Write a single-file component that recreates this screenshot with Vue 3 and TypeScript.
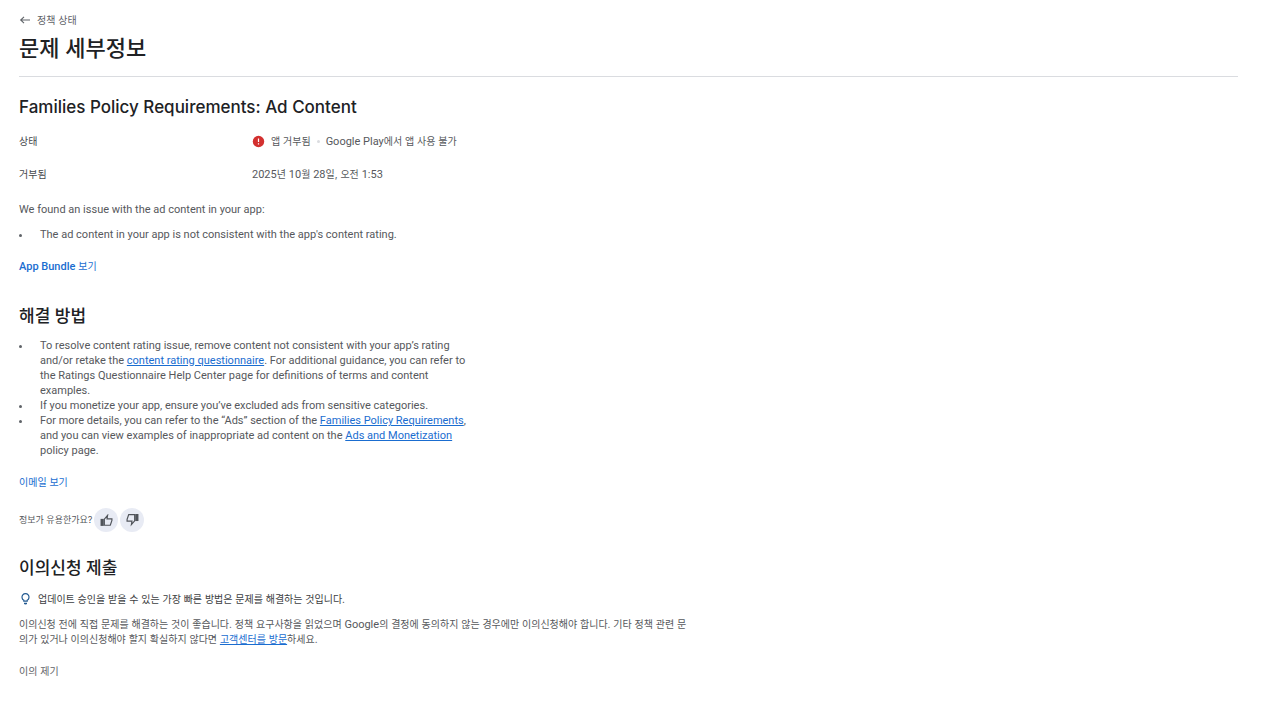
<script setup lang="ts">
import { ref } from 'vue'

type Vote = 'up' | 'down' | null

const vote = ref<Vote>(null)

function setVote(next: Vote): void {
  vote.value = vote.value === next ? null : next
}
</script>

<template>
  <main class="page">
    <header class="header">
      <a class="back" href="#policy-status">
        <svg class="back-icon" viewBox="0 0 12 12" aria-hidden="true">
          <path d="M11 6H1.6M5 2.8 1.7 6 5 9.2" fill="none" stroke="currentColor" stroke-width="1.1" />
        </svg>
        <span>정책 상태</span>
      </a>
      <h1 class="title">문제 세부정보</h1>
    </header>

    <section>
      <h2 class="heading heading-latin">Families Policy Requirements: Ad Content</h2>
      <dl class="facts">
        <div class="fact">
          <dt>상태</dt>
          <dd class="status">
            <svg class="error-icon" viewBox="0 0 13 13" aria-hidden="true">
              <circle cx="6.5" cy="6.5" r="5.7" fill="#d3302f" />
              <path d="M6.5 3.4v3.600M6.5 8.200v1.200" stroke="#fff" stroke-width="1.2" />
            </svg>
            <span>앱 거부됨</span>
            <span class="dot"></span>
            <span><span class="latin">Google Play</span>에서 앱 사용 불가</span>
          </dd>
        </div>
        <div class="fact">
          <dt>거부됨</dt>
          <dd><span class="latin">2025</span>년 <span class="latin">10</span>월 <span class="latin">28</span>일, 오전 <span class="latin">1:53</span></dd>
        </div>
      </dl>
      <p class="intro">We found an issue with the ad content in your app:</p>
      <ul class="list">
        <li>The ad content in your app is not consistent with the app's content rating.</li>
      </ul>
      <a class="action" href="#app-bundle"><span class="latin">App Bundle</span> 보기</a>
    </section>

    <section class="resolve">
      <h2 class="heading">해결 방법</h2>
      <ul class="list steps">
        <li>
          To resolve content rating issue, remove content not consistent with your app’s rating and/or
          retake the <a href="#questionnaire">content rating questionnaire</a>. For additional guidance,
          you can refer to the Ratings Questionnaire Help Center page for definitions of terms and
          content examples.
        </li>
        <li>If you monetize your app, ensure you’ve excluded ads from sensitive categories.</li>
        <li>
          For more details, you can refer to the “Ads” section of the
          <a href="#families">Families Policy Requirements</a>, and you can view examples of
          inappropriate ad content on the <a href="#ads">Ads and Monetization</a> policy page.
        </li>
      </ul>
      <a class="action" href="#email">이메일 보기</a>
      <div class="feedback">
        <span class="question">정보가 유용한가요?</span>
        <button type="button" class="vote" aria-label="예" :aria-pressed="vote === 'up'" @click="setVote('up')">
          <svg class="thumb" viewBox="0 0 24 24" aria-hidden="true">
            <path d="M1 9h6v13H1z" />
            <path d="M8 20.800V9.500L14 2.500 13 9h9v3l-3 8.800z" fill="none" stroke="currentColor" stroke-width="2.200" />
          </svg>
        </button>
        <button type="button" class="vote" aria-label="아니요" :aria-pressed="vote === 'down'" @click="setVote('down')">
          <svg class="thumb" viewBox="0 0 24 24" aria-hidden="true">
            <path d="M17 0h6v13h-6z" />
            <path d="M16 1.200v11.300L10 19.500 11 13H2v-3l3-8.800z" fill="none" stroke="currentColor" stroke-width="2.200" />
          </svg>
        </button>
      </div>
    </section>

    <section class="appeal">
      <h2 class="heading">이의신청 제출</h2>
      <p class="tip">
        <svg class="bulb" viewBox="0 0 12 12" aria-hidden="true">
          <path d="M4.800 8.200V7.200A3.500 3.500 0 1 1 8.200 7.200V8.200Z" fill="none" stroke="currentColor" stroke-width="1.200" />
          <path d="M5 9.800h3v.4a1.500 1.300 0 0 1-3 0z" fill="currentColor" />
        </svg>
        <span>업데이트 승인을 받을 수 있는 가장 빠른 방법은 문제를 해결하는 것입니다.</span>
      </p>
      <p class="note">
        이의신청 전에 직접 문제를 해결하는 것이 좋습니다. 정책 요구사항을 읽었으며 <span class="latin">Google</span>의 결정에 동의하지 않는 경우에만 이의신청해야 합니다. 기타 정책 관련 문의가 있거나 이의신청해야 할지 확실하지 않다면 <a href="#help">고객센터를 방문</a>하세요.
      </p>
      <button type="button" class="submit">이의 제기</button>
    </section>
  </main>
</template>

<style>
body {
  margin: 0;
  background: #fff;
}
</style>

<style scoped>
.page {
  padding: 12px 44px 40px 19px;
  font-family: Inter, "Noto Sans CJK KR", sans-serif;
  font-size: 10px;
  line-height: 16px;
  color: #56585c;
}

.latin,
.intro,
.list {
  font-family: Roboto, "Noto Sans CJK KR", sans-serif;
  font-size: 11px;
}

.latin {
  line-height: 1;
}

h1,
h2,
p,
ul,
dl,
dd {
  margin: 0;
  padding: 0;
}

.header {
  padding-bottom: 10px;
  border-bottom: 1px solid #dadce0;
}

.back {
  display: flex;
  align-items: center;
  gap: 6px;
  width: fit-content;
  color: #5f6368;
  text-decoration: none;
}

.back-icon,
.bulb {
  flex: none;
  width: 12px;
  height: 12px;
}

.error-icon {
  flex: none;
  width: 13px;
  height: 13px;
}

.title {
  margin-top: 2px;
  font-size: 22px;
  font-weight: 500;
  line-height: 36px;
  color: #202124;
}

.heading {
  font-size: 17px;
  font-weight: 500;
  line-height: 24px;
  color: #202124;
}

.heading-latin {
  margin-top: 18px;
}

.facts {
  display: grid;
  gap: 17px;
  margin-top: 14px;
}

.fact {
  display: grid;
  grid-template-columns: 233px 1fr;
}

dt {
  color: #46484c;
}

.status {
  display: flex;
  align-items: center;
  gap: 6px;
}

.dot {
  width: 3px;
  height: 3px;
  border-radius: 50%;
  background: #dadce0;
}

.intro {
  margin-top: 20px;
  line-height: 15px;
}

.list {
  margin-top: 10px;
  padding-left: 21px;
  line-height: 15px;
  list-style: none;
}

.list li {
  position: relative;
}

.list li::before {
  content: "";
  position: absolute;
  top: 7px;
  left: -21px;
  width: 3px;
  height: 3px;
  border-radius: 50%;
  background: #5f6368;
}

.steps {
  max-width: 432px;
  margin-top: 10px;
}

.list a,
.note a {
  color: #1a6dd0;
  text-decoration: underline;
}

.action {
  display: block;
  width: fit-content;
  margin-top: 16px;
  color: #1a6dd0;
  text-decoration: none;
}

.action .latin {
  font-weight: 500;
}

.resolve {
  margin-top: 30px;
}

.feedback {
  display: flex;
  align-items: center;
  gap: 2px;
  margin-top: 18px;
}

.question {
  font-size: 9px;
}

.vote {
  display: grid;
  place-items: center;
  width: 24px;
  height: 24px;
  padding: 0;
  border: 0;
  border-radius: 50%;
  background: #e8ebf4;
  color: #50545a;
  cursor: pointer;
}

.thumb {
  width: 13px;
  height: 13px;
  fill: currentColor;
}

.appeal {
  margin-top: 24px;
}

.tip {
  display: flex;
  align-items: center;
  gap: 7px;
  margin-top: 11px;
  color: #3c3e42;
}

.bulb {
  color: #245b92;
}

.note {
  max-width: 674px;
  margin-top: 10px;
  line-height: 15px;
}

.submit {
  display: block;
  margin-top: 16px;
  padding: 0;
  border: 0;
  background: none;
  font: inherit;
  color: #5f6368;
  cursor: pointer;
}
</style>
